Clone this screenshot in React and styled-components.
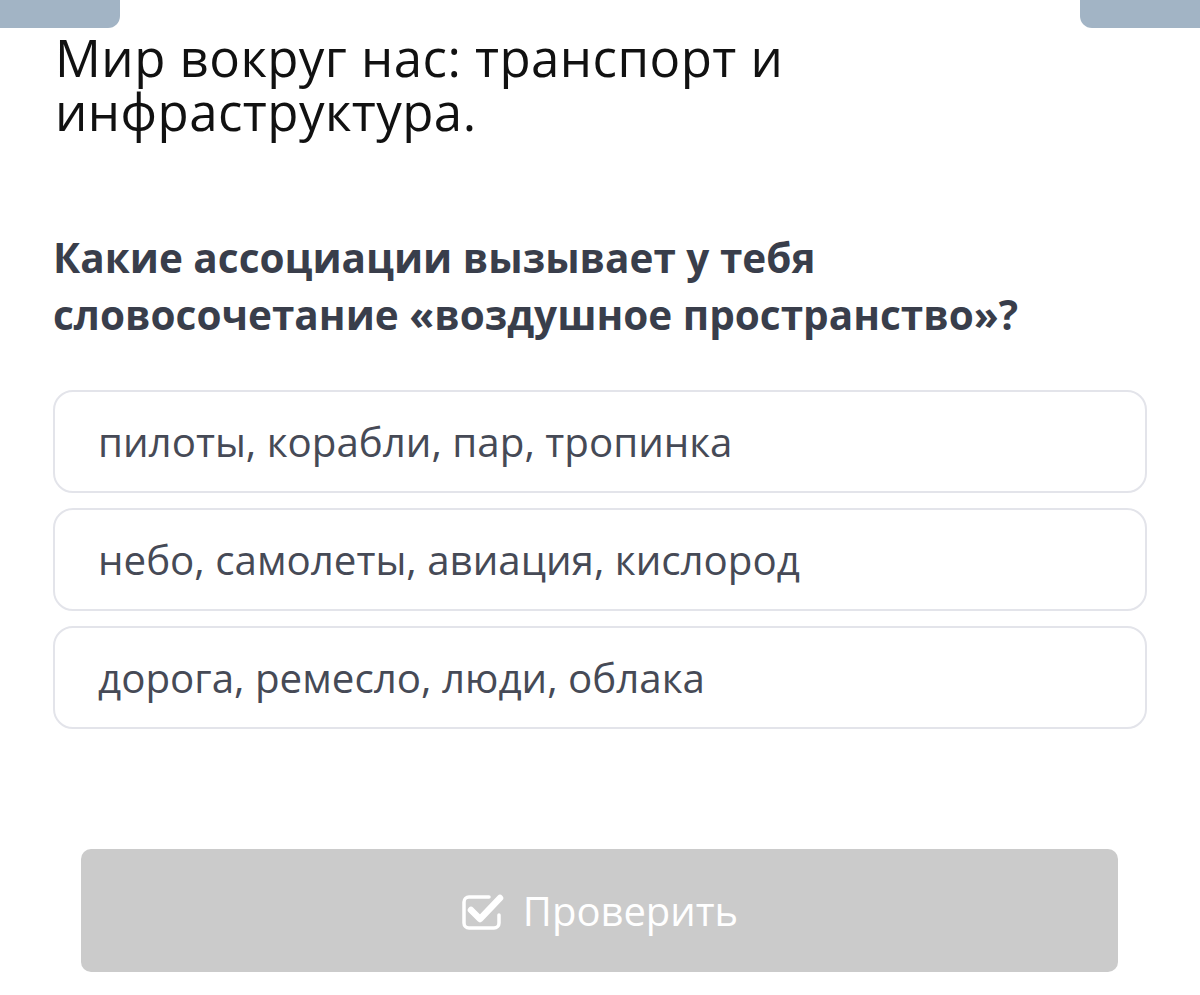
import React from "react";
import styled, { createGlobalStyle } from "styled-components";

const Global = createGlobalStyle`
  html, body { margin: 0; padding: 0; background: #ffffff; }
  body { font-family: "Open Sans", "Noto Sans", sans-serif; }
`;

const Page = styled.div`
  width: 1200px;
  height: 995px;
  overflow: hidden;
  display: flex;
  flex-direction: column;
`;

const TabBar = styled.div`
  display: flex;
  justify-content: space-between;
  height: 28px;
`;

const Tab = styled.div`
  width: 120px;
  height: 28px;
  background: #a2b4c5;
  border-radius: ${(p) => (p.$side === "left" ? "0 0 12px 0" : "0 0 0 12px")};
`;

const Content = styled.div`
  padding: 2px 53px 0 53px;
  display: flex;
  flex-direction: column;
`;

const Title = styled.h1`
  margin: 0 0 0 2px;
  font-family: "Open Sans", sans-serif;
  font-weight: 400;
  font-size: 51px;
  line-height: 54px;
  letter-spacing: 0.45px;
  color: #111111;
`;

const Question = styled.h2`
  margin: 91px 0 0 0;
  font-family: "Open Sans", sans-serif;
  font-weight: 700;
  font-size: 40.5px;
  line-height: 57px;
  color: #393e4b;
`;

const Options = styled.div`
  margin-top: 47px;
  display: flex;
  flex-direction: column;
  gap: 15px;
`;

const Option = styled.div`
  height: 103px;
  box-sizing: border-box;
  border: 2px solid #e3e4ea;
  border-radius: 20px;
  background: #ffffff;
  display: flex;
  align-items: center;
  padding: 0 43px;
  font-family: "Open Sans", sans-serif;
  font-size: 40.3px;
  color: #464a56;
`;

const Button = styled.button`
  margin: 120px 29px 0 28px;
  height: 123px;
  border: none;
  border-radius: 10px;
  background: #cbcbcb;
  color: #ffffff;
  display: flex;
  align-items: center;
  justify-content: center;
  gap: 18px;
  font-family: "Open Sans", sans-serif;
  font-size: 40px;
  padding: 0;
`;

const CheckIcon = () => (
  <svg width="44" height="38" viewBox="0 0 44 38" fill="none">
    <path
      d="M28 5 H8 a5 5 0 0 0 -5 5 v21 a5 5 0 0 0 5 5 h25 a5 5 0 0 0 5 -5 v-8"
      stroke="#ffffff"
      strokeWidth="3.5"
      strokeLinecap="round"
      strokeLinejoin="round"
    />
    <path
      d="M10 18 L19 27 L39 6"
      stroke="#ffffff"
      strokeWidth="6.5"
      strokeLinecap="round"
      strokeLinejoin="round"
    />
  </svg>
);

const options = [
  "пилоты, корабли, пар, тропинка",
  "небо, самолеты, авиация, кислород",
  "дорога, ремесло, люди, облака",
];

export default function App() {
  return (
    <Page>
      <Global />
      <TabBar>
        <Tab $side="left" />
        <Tab $side="right" />
      </TabBar>
      <Content>
        <Title>
          Мир вокруг нас: транспорт и
          <br />
          инфраструктура.
        </Title>
        <Question>
          Какие ассоциации вызывает у тебя
          <br />
          словосочетание «воздушное пространство»?
        </Question>
        <Options>
          {options.map((o) => (
            <Option key={o}>{o}</Option>
          ))}
        </Options>
        <Button>
          <CheckIcon />
          Проверить
        </Button>
      </Content>
    </Page>
  );
}
